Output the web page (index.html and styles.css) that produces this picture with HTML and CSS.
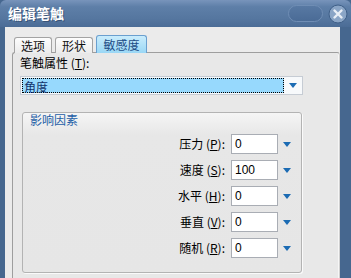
FILE: index.html
```html
<!DOCTYPE html>
<html>
<head>
<meta charset="utf-8">
<link rel="stylesheet" href="styles.css">
</head>
<body>
<div class="window">
  <div class="titlebar">
    <span class="title">编辑笔触</span>
    <span class="tb-pill"></span>
    <span class="tb-close">
      <svg width="20" height="20" viewBox="0 0 20 20">
        <circle cx="10" cy="10" r="9" fill="#8aa5c6" stroke="#3f5f88" stroke-width="1"/>
        <path d="M6.5 6.5 L13.5 13.5 M13.5 6.5 L6.5 13.5" stroke="#e8eef6" stroke-width="2.4" stroke-linecap="round"/>
      </svg>
    </span>
  </div>
  <div class="client">
    <div class="tabs">
      <div class="tab">选项</div>
      <div class="tab">形状</div>
      <div class="tab active">敏感度</div>
    </div>
    <div class="panel">
      <div class="field-label">笔触属性 (<u>T</u>):</div>
      <div class="dropdown">
        <div class="dd-value">角度</div>
        <div class="dd-btn"><span class="tri"></span></div>
      </div>
      <div class="group">
        <div class="legend">影响因素</div>
        <div class="rows">
          <div class="row"><span class="lbl">压力 (<u>P</u>):</span><span class="inp">0</span><span class="tri"></span></div>
          <div class="row"><span class="lbl">速度 (<u>S</u>):</span><span class="inp">100</span><span class="tri"></span></div>
          <div class="row"><span class="lbl">水平 (<u>H</u>):</span><span class="inp">0</span><span class="tri"></span></div>
          <div class="row"><span class="lbl">垂直 (<u>V</u>):</span><span class="inp">0</span><span class="tri"></span></div>
          <div class="row"><span class="lbl">随机 (<u>R</u>):</span><span class="inp">0</span><span class="tri"></span></div>
        </div>
      </div>
    </div>
  </div>
</div>
</body>
</html>
```

FILE: styles.css
```css
html, body {
  margin: 0;
  padding: 0;
}
body {
  width: 351px;
  height: 278px;
  overflow: hidden;
  background: #d8dde4;
  font-family: "Noto Sans CJK SC", "Liberation Sans", sans-serif;
  font-size: 12px;
  color: #000;
}
.window {
  width: 351px;
  height: 278px;
  display: flex;
  flex-direction: column;
  background: #46678f;
}
.titlebar {
  height: 27px;
  flex: none;
  display: flex;
  align-items: center;
  padding-left: 8px;
  padding-right: 3px;
  border-radius: 6px 6px 0 0;
  background: linear-gradient(#7894bb 0%, #5e7fa8 25%, #55769f 70%, #4b6c96 100%);
}
.title {
  color: #fff;
  font-weight: bold;
  font-size: 14px;
  letter-spacing: 0;
  text-shadow: 1px 1px 0 #3a5377;
  flex: 1;
  line-height: 27px;
}
.tb-pill {
  width: 35px;
  height: 17px;
  border-radius: 9px;
  background: linear-gradient(#5879a3, #4a6b96);
  border: 1px solid #6f8db4;
  box-sizing: border-box;
  margin-right: 5px;
}
.tb-close {
  width: 20px;
  height: 20px;
  display: block;
}
.tb-close svg {
  display: block;
}
.client {
  flex: 1;
  margin: 0 11px 0 5px;
  background: #ebebeb;
  padding: 9px 0 0 7px;
  display: flex;
  flex-direction: column;
  min-height: 0;
}
.tabs {
  display: flex;
  align-items: flex-end;
  height: 17px;
  padding-left: 2px;
  gap: 3px;
  margin-bottom: -1px;
  position: relative;
  z-index: 1;
}
.tab {
  height: 16px;
  box-sizing: border-box;
  width: 38px;
  text-align: center;
  line-height: 15px;
  border: 1px solid #a3a3a3;
  border-bottom: none;
  border-radius: 3px 3px 0 0;
  background: linear-gradient(#fdfdfd, #ececec);
  color: #111;
}
.tab.active {
  width: 51px;
  height: 18px;
  line-height: 17px;
  border-color: #6a9fcf;
  background: linear-gradient(#c9ecfc, #9ad7f5);
  color: #1d4d86;
}
.panel {
  flex: 1;
  border: 1px solid #9e9e9e;
  border-bottom: none;
  border-right: 1px solid #d0d0d0;
  border-radius: 3px 3px 0 0;
  background: #e8e8e8;
  padding: 3px 0 0 7px;
  box-shadow: inset -1px 0 0 #f6f6f6;
}
.field-label {
  line-height: 14px;
  height: 14px;
}
u {
  text-decoration: underline;
  text-underline-offset: 1px;
}
.dropdown {
  margin-top: 6px;
  width: 283px;
  height: 19px;
  box-sizing: border-box;
  border: 1px solid #c6ccd4;
  background: #f7f9fb;
  display: flex;
  padding: 1px;
}
.dd-value {
  flex: 1;
  background: #97d9fd;
  border: 1px dotted #000;
  color: #12336b;
  line-height: 15px;
  padding-left: 1px;
}
.dd-btn {
  width: 17px;
  display: flex;
  align-items: center;
  justify-content: center;
}
.tri {
  display: block;
  width: 0;
  height: 0;
  border-left: 4px solid transparent;
  border-right: 4px solid transparent;
  border-top: 5px solid #1b6bb3;
}
.group {
  margin-top: 17px;
  margin-left: 2px;
  width: 280px;
  height: 161px;
  box-sizing: border-box;
  border: 1px solid #b3b3b3;
  border-radius: 3px;
  background: linear-gradient(#f5f5f5 0px, #e7e7e7 22px, #e6e6e6 100%);
  box-shadow: 1px 1px 0 #fafafa;
}
.legend {
  color: #1f5fa7;
  line-height: 14px;
  height: 14px;
  padding-left: 7px;
}
.rows {
  padding-top: 7px;
  padding-right: 10px;
  display: flex;
  flex-direction: column;
  gap: 6px;
}
.row {
  display: flex;
  justify-content: flex-end;
  align-items: center;
  height: 20px;
}
.lbl {
  line-height: 14px;
  margin-right: 6px;
}
.inp {
  width: 47px;
  height: 20px;
  box-sizing: border-box;
  border: 1px solid #a9adb4;
  background: #fff;
  font-family: "Liberation Sans", sans-serif;
  font-size: 12px;
  line-height: 18px;
  padding-left: 3px;
}
.row .tri {
  margin-left: 5px;
}
```
